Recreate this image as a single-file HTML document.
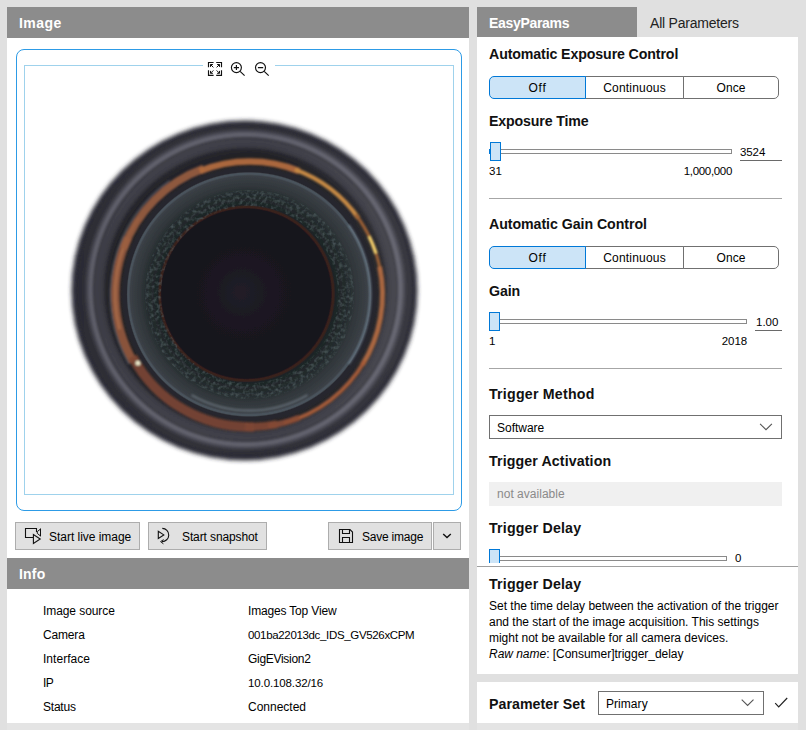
<!DOCTYPE html>
<html lang="en">
<head>
<meta charset="utf-8">
<title>Image / EasyParams</title>
<style>
*{box-sizing:border-box;margin:0;padding:0}
html,body{width:806px;height:730px;overflow:hidden;background:#e0e0e0}
body{position:relative;font-family:"Liberation Sans",sans-serif;font-size:12px;color:#000;}
.abs{position:absolute}
.panel{position:absolute;background:#fff}
.hdr{position:absolute;background:#8c8c8c;color:#fff;font-weight:bold;font-size:14px;line-height:31px;padding:1px 0 0 12px;white-space:nowrap}
.t{position:absolute;white-space:nowrap;line-height:16px}
.n{font-size:11.5px}
.h{position:absolute;white-space:nowrap;font-weight:bold;font-size:14.2px;line-height:18px;color:#111}
.btn{position:absolute;height:28px;top:522px;background:#e1e1e1;border:1px solid #adadad}
.btn .t{top:6px}
.seg{position:absolute;height:23px;border:1px solid #707070;background:#fff;text-align:center;line-height:22px}
.seg.on{background:#cce4f7;border-color:#0078d7;border-radius:5px 0 0 5px;z-index:2}
.seg.last{border-radius:0 5px 5px 0}
.track{position:absolute;height:5px;border:1px solid #8a8a8a;background:#fff}
.thumb{position:absolute;width:11px;height:19px;background:#cce4f7;border:1px solid #0078d7}
.ul{position:absolute;height:1px;background:#6a6a6a}
.sep{position:absolute;height:1px;background:#a6a6a6;left:489px;width:293px}
.dd{position:absolute;border:1px solid #707070;background:#fff}
</style>
</head>
<body>

<div class="abs" style="left:7px;top:723px;width:462px;height:7px;background:#e4e4e4"></div>
<div class="abs" style="left:477px;top:723px;width:321px;height:7px;background:#e4e4e4"></div>
<!-- LEFT PANEL -->
<div class="panel" style="left:7px;top:7px;width:462px;height:716px"></div>
<div class="hdr" style="left:7px;top:7px;width:462px;height:31px;letter-spacing:0.43px">Image</div>

<!-- image viewer -->
<div class="abs" style="left:16px;top:49px;width:446px;height:462px;border:1.5px solid #2d9be6;border-radius:8px"></div>
<div class="abs" id="inner" style="left:24px;top:65px;width:430px;height:430px;border:1px solid #9fd2ec;overflow:hidden">
</div>
<!--BOTTLE-->
<svg class="abs" style="left:25px;top:66px" width="428" height="428" viewBox="25 66 428 428">
<defs>
<filter id="b2" x="-10%" y="-10%" width="120%" height="120%"><feGaussianBlur stdDeviation="2.2"/></filter>
<filter id="b1" x="-10%" y="-10%" width="120%" height="120%"><feGaussianBlur stdDeviation="0.9"/></filter>
<filter id="b05" x="-10%" y="-10%" width="120%" height="120%"><feGaussianBlur stdDeviation="0.5"/></filter>
<filter id="tex" color-interpolation-filters="sRGB" x="-15%" y="-15%" width="130%" height="130%">
<feTurbulence type="fractalNoise" baseFrequency="0.28 0.28" numOctaves="2" seed="7" result="n"/>
<feColorMatrix in="n" type="matrix" values="0 0 0 0 0.34  0 0 0 0 0.40  0 0 0 0 0.41  0 0 0 1.5 -0.64" result="c"/>
<feComposite in="c" in2="SourceAlpha" operator="in"/>
<feGaussianBlur stdDeviation="0.7"/>
</filter>
<radialGradient id="gBody" cx="245.5" cy="289.5" r="174" gradientUnits="userSpaceOnUse">
<stop offset="0" stop-color="#232329"/>
<stop offset="0.78" stop-color="#222227"/>
<stop offset="0.805" stop-color="#27272d"/>
<stop offset="0.822" stop-color="#3a3a43"/>
<stop offset="0.861" stop-color="#41414a"/>
<stop offset="0.870" stop-color="#34343b"/>
<stop offset="0.878" stop-color="#52525c"/>
<stop offset="0.891" stop-color="#676773"/>
<stop offset="0.907" stop-color="#4c4c56"/>
<stop offset="0.927" stop-color="#2f2f37"/>
<stop offset="1" stop-color="#2c2c34"/>
</radialGradient>
<radialGradient id="gInner" cx="249.5" cy="294.5" r="128" fx="240" fy="292" gradientUnits="userSpaceOnUse">
<stop offset="0" stop-color="#211e28"/>
<stop offset="0.28" stop-color="#1a1720"/>
<stop offset="0.66" stop-color="#16121a"/>
<stop offset="0.672" stop-color="#3a211c"/>
<stop offset="0.683" stop-color="#38221e"/>
<stop offset="0.694" stop-color="#1d2426"/>
<stop offset="0.79" stop-color="#252c2e"/>
<stop offset="0.84" stop-color="#30363a"/>
<stop offset="0.925" stop-color="#3b4046"/>
<stop offset="0.938" stop-color="#4a535c"/>
<stop offset="0.948" stop-color="#4a535c"/>
<stop offset="0.958" stop-color="#28282e"/>
<stop offset="1" stop-color="#26262c"/>
</radialGradient>
<linearGradient id="lr" x1="71" y1="0" x2="417" y2="0" gradientUnits="userSpaceOnUse">
<stop offset="0" stop-color="#000" stop-opacity="0.05"/>
<stop offset="0.55" stop-color="#fff" stop-opacity="0"/>
<stop offset="1" stop-color="#fff" stop-opacity="0.05"/>
</linearGradient>
</defs>
<rect x="25" y="66" width="428" height="428" fill="#fff"/>
<g filter="url(#b2)">
<ellipse cx="244.5" cy="290.5" rx="173" ry="170" fill="#2c2c34"/>
</g>
<g filter="url(#b1)">
<ellipse cx="244.5" cy="290.5" rx="168" ry="165" fill="url(#gBody)"/>
<ellipse cx="244.5" cy="290.5" rx="168" ry="165" fill="url(#lr)"/>
</g>
<g filter="url(#b05)">
<circle cx="249.5" cy="294.5" r="128" fill="url(#gInner)"/>
</g>
<circle cx="249.5" cy="294.5" r="96.5" fill="none" stroke="#000" stroke-width="16" filter="url(#tex)"/>
<g filter="url(#b1)" stroke-linecap="butt">
<path d="M133.3 361.6A134.2 134.2 0 0 1 127.9 237.8" stroke="#955a3e" stroke-width="8.5" fill="none" opacity="0.9"/>
<path d="M119.6 329.3A134.5 134.5 0 0 1 139.3 217.4" stroke="#b0714e" stroke-width="2.5" fill="none" opacity="0.8"/>
<path d="M123.6 248.7A134 134 0 0 1 203.7 168.6" stroke="#9a5e40" stroke-width="8" fill="none" opacity="0.9"/>
<path d="M128.9 364.1A139.3 139.3 0 0 1 169.6 180.4" stroke="#5c6672" stroke-width="1.2" fill="none" opacity="0.8"/>
<path d="M199.7 171.2A133 133 0 0 1 299.3 171.2" stroke="#b26c3e" stroke-width="6.5" fill="none" opacity="0.95"/>
<path d="M295.0 169.5A133 133 0 0 1 358.4 218.2" stroke="#c48844" stroke-width="4.5" fill="none" opacity="1"/>
<path d="M355.7 214.5A133 133 0 0 1 380.5 271.4" stroke="#9c6036" stroke-width="3" fill="none" opacity="1"/>
<path d="M369.0 236.2A133 133 0 0 1 376.0 253.4" stroke="#f0cc6a" stroke-width="3.5" fill="none" opacity="1"/>
<path d="M379.6 266.8A133 133 0 0 1 362.3 365.0" stroke="#b06a42" stroke-width="5" fill="none" opacity="0.95"/>
<path d="M364.7 361.0A133 133 0 0 1 283.9 423.0" stroke="#a65c38" stroke-width="4" fill="none" opacity="0.95"/>
<path d="M299.2 417.6A132.8 132.8 0 0 1 268.0 426.0" stroke="#8a4c36" stroke-width="6" fill="none" opacity="0.9"/>
<path d="M277.1 424.2A132.6 132.6 0 0 1 244.9 427.0" stroke="#844a35" stroke-width="8" fill="none" opacity="0.88"/>
<path d="M254.1 426.9A132.5 132.5 0 0 1 132.5 356.7" stroke="#7e4734" stroke-width="9.5" fill="none" opacity="0.88"/>
<path d="M348.9 224.9A121.3 121.3 0 0 1 348.9 364.1" stroke="#8396a6" stroke-width="1.1" fill="none" opacity="0.95"/>
<path d="M307.5 395.0A116 116 0 0 1 191.5 395.0" stroke="#707c84" stroke-width="2" fill="none" opacity="0.8"/>
<circle cx="138" cy="363" r="2.6" fill="#e8e6c8"/>
</g>
</svg>
<!--/BOTTLE-->
<!-- toolbar gap -->
<div class="abs" style="left:203px;top:60px;width:72px;height:18px;background:#fff"></div>

<!-- toolbar icons -->
<svg class="abs" style="left:204px;top:58px" width="70" height="22" viewBox="204 58 70 22" fill="none" stroke="#111" stroke-width="1.15">
<path d="M208.5 67.3V62.5H213.6M216.2 62.5H221.5V67.3M221.5 70.2V75.3H216.2M213.6 75.3H208.5V70.2"/>
<path d="M213.4 67.4L210.6 64.6M210.5 66.9V64.5H212.9M216.6 67.4L219.4 64.6M217.1 64.5H219.5V66.9M213.4 70.4L210.6 73.2M210.5 70.9V73.3H212.9M216.6 70.4L219.4 73.2M219.5 70.9V73.3H217.1" stroke-width="1"/>
<circle cx="236.4" cy="67.6" r="5"/>
<path d="M233.8 67.6H239M236.4 65.1V70.1M240.1 71.3L244.6 75.7"/>
<circle cx="260.5" cy="67.6" r="5"/>
<path d="M257.9 67.6H263.2M264.2 71.3L268.7 75.7"/>
</svg>
<!-- buttons -->
<div class="btn" style="left:15px;width:125px"><span class="t" style="left:33px;letter-spacing:-0.03px">Start live image</span></div>
<div class="btn" style="left:148px;width:119px"><span class="t" style="left:33px;letter-spacing:-0.11px">Start snapshot</span></div>
<div class="btn" style="left:328px;width:104px"><span class="t" style="left:33px;letter-spacing:-0.22px">Save image</span></div>
<div class="btn" style="left:433px;width:28px"></div>

<svg class="abs" style="left:15px;top:522px" width="446" height="28" viewBox="15 522 446 28" fill="none" stroke="#111" stroke-width="1.1">
<path d="M33 537.5H25.5V528.5H36.5V532"/>
<path d="M40.5 528.6V536.2M40.5 529L37.3 531.6V533.4L40.5 536" stroke-width="1"/>
<path d="M33.4 534.6V543.4L40.2 539Z" fill="#e1e1e1"/>
<path d="M158.3 531.3V538.5L163.8 534.9Z"/>
<path d="M162.3 528.4A6.6 6.6 0 0 1 162 541.6"/>
<path d="M163.6 539.6L160.6 541.6L163.4 543.8" stroke-width="1"/>
<path d="M339.5 529.5H350L352.5 532V542.5H339.5Z"/>
<path d="M342.5 529.5V533.5H349.5V529.5M342.5 542.5V537.5H349.5V542.5"/>
<path d="M443.2 534L447 537.6L450.8 534" stroke-width="1.4"/>
</svg>
<!-- INFO -->
<div class="hdr" style="left:7px;top:558px;width:462px;height:31px;letter-spacing:0.21px">Info</div>
<span class="t" style="left:43px;top:603px;letter-spacing:-0.08px">Image source</span>
<span class="t" style="left:43px;top:627px;letter-spacing:-0.16px">Camera</span>
<span class="t" style="left:43px;top:651px;letter-spacing:0.03px">Interface</span>
<span class="t" style="left:43px;top:675px;letter-spacing:-0.57px">IP</span>
<span class="t" style="left:43px;top:699px;letter-spacing:-0.22px">Status</span>
<span class="t" style="left:248px;top:603px;letter-spacing:-0.17px">Images Top View</span>
<span class="t n" style="left:248px;top:627px;letter-spacing:-0.34px">001ba22013dc_IDS_GV526xCPM</span>
<span class="t" style="left:248px;top:651px;letter-spacing:-0.3px">GigEVision2</span>
<span class="t n" style="left:248px;top:675px;letter-spacing:-0.12px">10.0.108.32/16</span>
<span class="t" style="left:248px;top:699px">Connected</span>

<!-- RIGHT PANEL -->
<div class="panel" style="left:477px;top:37px;width:321px;height:529px"></div>
<div class="hdr" style="left:477px;top:7px;width:160px;height:30px;line-height:30px;letter-spacing:-0.31px">EasyParams</div>
<span class="t" style="left:650px;top:15px;font-size:14px;color:#222;letter-spacing:-0.21px">All Parameters</span>

<span class="h" style="left:489px;top:45px;letter-spacing:-0.12px">Automatic Exposure Control</span>
<div class="seg on" style="left:489px;top:76px;width:97px;letter-spacing:0.73px">Off</div>
<div class="seg" style="left:585px;top:76px;width:99px;letter-spacing:0.2px">Continuous</div>
<div class="seg last" style="left:683px;top:76px;width:96px;letter-spacing:0.05px">Once</div>
<span class="h" style="left:489px;top:112px;letter-spacing:-0.16px">Exposure Time</span>
<div class="track" style="left:489px;top:149px;width:243px"></div>
<div class="abs" style="left:489px;top:149px;width:2px;height:5px;background:#0078d7"></div>
<div class="thumb" style="left:490px;top:142px"></div>
<span class="t n" style="left:740px;top:144px;letter-spacing:-0.1px">3524</span>
<div class="ul" style="left:740px;top:160px;width:42px"></div>
<span class="t n" style="left:489px;top:163px;letter-spacing:0.05px">31</span>
<span class="t n" style="right:74px;top:163px;letter-spacing:-0.33px">1,000,000</span>
<div class="sep" style="top:198px"></div>

<span class="h" style="left:489px;top:215px;letter-spacing:-0.06px">Automatic Gain Control</span>
<div class="seg on" style="left:489px;top:246px;width:97px;letter-spacing:0.73px">Off</div>
<div class="seg" style="left:585px;top:246px;width:99px;letter-spacing:0.2px">Continuous</div>
<div class="seg last" style="left:683px;top:246px;width:96px;letter-spacing:0.05px">Once</div>
<span class="h" style="left:489px;top:282px;letter-spacing:-0.09px">Gain</span>
<div class="track" style="left:489px;top:319px;width:258px"></div>
<div class="thumb" style="left:489px;top:312px"></div>
<span class="t n" style="left:756px;top:314px">1.00</span>
<div class="ul" style="left:755px;top:330px;width:27px"></div>
<span class="t n" style="left:489px;top:333px">1</span>
<span class="t n" style="right:59px;top:333px;letter-spacing:-0.1px">2018</span>
<div class="sep" style="top:368px"></div>

<span class="h" style="left:489px;top:385px;letter-spacing:0.22px">Trigger Method</span>
<div class="dd" style="left:489px;top:415px;width:293px;height:24px"><span class="t" style="left:7px;top:4px;letter-spacing:-0.02px">Software</span></div>
<span class="h" style="left:489px;top:452px;letter-spacing:0.12px">Trigger Activation</span>
<div class="abs" style="left:489px;top:482px;width:293px;height:24px;background:#f0f0f0"><span class="t" style="left:8px;top:4px;color:#8a8a8a;letter-spacing:0.02px">not available</span></div>
<span class="h" style="left:489px;top:519px;letter-spacing:0.18px">Trigger Delay</span>
<div class="abs" style="left:477px;top:540px;width:321px;height:23px;overflow:hidden">
  <div class="track" style="left:12px;top:16px;width:238px"></div>
  <div class="thumb" style="left:12px;top:9px"></div>
  <span class="t n" style="left:258px;top:10px">0</span>
</div>

<!-- description panel -->
<div class="panel" style="left:477px;top:566px;width:321px;height:108px;border-top:1px solid #a0a0a0"></div>
<span class="h" style="left:489px;top:575px;letter-spacing:0.18px">Trigger Delay</span>
<span class="t" style="left:489px;top:598px">Set the time delay between the activation of the trigger</span>
<span class="t" style="left:489px;top:614px">and the start of the image acquisition. This settings</span>
<span class="t" style="left:489px;top:630px;letter-spacing:-0.02px">might not be available for all camera devices.</span>
<span class="t" style="left:489px;top:646px;letter-spacing:-0.03px"><i>Raw name</i>: [Consumer]trigger_delay</span>

<!-- parameter set -->
<div class="panel" style="left:477px;top:682px;width:321px;height:41px"></div>
<span class="h" style="left:489px;top:695px;letter-spacing:0.04px">Parameter Set</span>
<div class="dd" style="left:598px;top:691px;width:166px;height:24px"><span class="t" style="left:7px;top:4px;letter-spacing:0.05px">Primary</span></div>

<svg class="abs" style="left:740px;top:410px" width="66" height="320" viewBox="740 410 66 320" fill="none" stroke="#555" stroke-width="1.1">
<path d="M760.1 423.8L766 429.7L771.9 423.8"/>
<path d="M741.7 699.6L747.6 705.5L753.5 699.6"/>
<path d="M775.2 703.2L778.7 706.8L787.2 698" stroke="#222" stroke-width="1.2"/>
</svg>
</body>
</html>
